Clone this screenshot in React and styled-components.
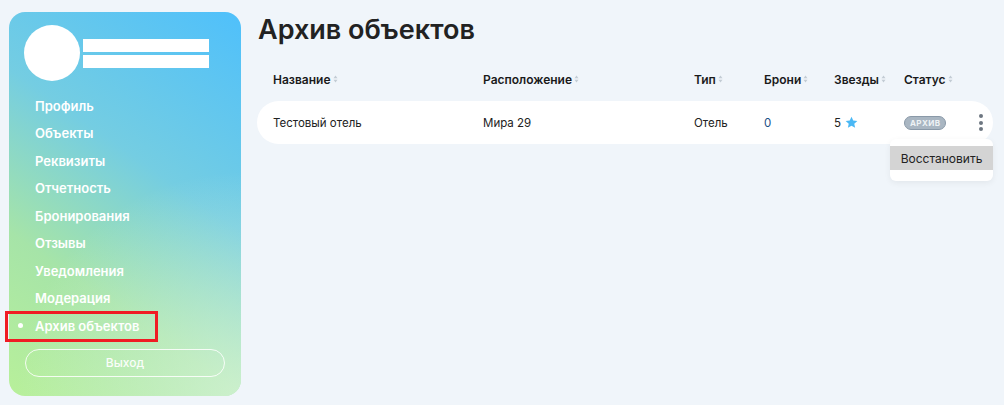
import styled, { createGlobalStyle } from 'styled-components';

const Global = createGlobalStyle`
    body {
        margin: 0;
        background: #f0f5fa;
        font-family: Inter, "Noto Sans", sans-serif;
    }
`

const menu = ["Профиль", "Объекты", "Реквизиты", "Отчетность", "Бронирования", "Отзывы", "Уведомления", "Модерация", "Архив объектов"];
const columns = ["Название", "Расположение", "Тип", "Брони", "Звезды", "Статус"];

function SortIcon() {
    return (
        <svg width="5" height="8" viewBox="0 0 5 8">
            <path d="M2.5 0.5 L4.5 3.2 L0.5 3.2 Z" fill="#c3ccd4" />
            <path d="M2.5 7.5 L4.5 4.8 L0.5 4.8 Z" fill="#c3ccd4" />
        </svg>
    )
}

function Star() {
    return (
        <svg width="13" height="13" viewBox="0 0 24 24">
            <path d="M12 1.5l3.2 7 7.6.8-5.7 5.1 1.6 7.5L12 18l-6.7 3.9 1.6-7.5L1.2 9.3l7.6-.8z" fill="#4ab8f5" />
        </svg>
    )
}

export default function App() {
    return (
        <Page>
            <Global />
            <Sidebar>
                <User>
                    <Avatar />
                    <Lines>
                        <Line />
                        <Line />
                    </Lines>
                </User>
                <Menu>
                    {menu.map((item, i) => (
                        <MenuItem key={item} active={i === menu.length - 1}>{item}</MenuItem>
                    ))}
                </Menu>
                <Exit>Выход</Exit>
            </Sidebar>
            <Main>
                <Title>Архив объектов</Title>
                <Header>
                    {columns.map((c) => (
                        <HeadCell key={c}>{c}<SortIcon /></HeadCell>
                    ))}
                </Header>
                <Row>
                    <Cell>Тестовый отель</Cell>
                    <Cell>Мира 29</Cell>
                    <Cell>Отель</Cell>
                    <Cell blue>0</Cell>
                    <Cell>5 <Star /></Cell>
                    <Cell>
                        <Badge>АРХИВ</Badge>
                        <Kebab><i /><i /><i /></Kebab>
                    </Cell>
                    <Dropdown>
                        <DropItem>Восстановить</DropItem>
                    </Dropdown>
                </Row>
            </Main>
        </Page>
    )
}

const Page = styled.div`
    display: flex;
    gap: 16px;
    padding: 12px 11px 9px 9px;
    height: 405px;
    box-sizing: border-box;
`

const Sidebar = styled.div`
    width: 232px;
    flex-shrink: 0;
    border-radius: 16px;
    background: linear-gradient(215deg, #4fc0fb 0%, #74cde2 40%, #a6e4a8 70%, #b8f09a 100%);
    position: relative;
    padding: 13px 0 0;
    box-sizing: border-box;
    display: flex;
    flex-direction: column;

    &::after {
        content: "";
        position: absolute;
        inset: 0;
        border-radius: inherit;
        background: radial-gradient(circle at 100% 100%, rgba(220, 245, 220, 0.7) 0%, rgba(220, 245, 220, 0) 50%);
        pointer-events: none;
    }
`

const User = styled.div`
    display: flex;
    align-items: center;
    padding-left: 15px;
    gap: 3px;
    position: relative;
    z-index: 1;
`

const Avatar = styled.div`
    width: 56px;
    height: 56px;
    border-radius: 50%;
    background: #fff;
`

const Lines = styled.div`
    display: flex;
    flex-direction: column;
    gap: 3px;
`

const Line = styled.div`
    width: 126px;
    height: 13px;
    background: #fff;
`

const Menu = styled.div`
    display: flex;
    flex-direction: column;
    margin-top: 11px;
    position: relative;
    z-index: 1;
`

const MenuItem = styled.div`
    height: 27.5px;
    display: flex;
    align-items: center;
    padding-left: 26px;
    font-size: 13px;
    font-weight: 600;
    color: #fff;
    position: relative;

    &::before {
        content: "";
        display: ${p => p.active ? 'block' : 'none'};
        position: absolute;
        left: 9px;
        top: 11px;
        width: 5px;
        height: 5px;
        border-radius: 50%;
        background: #fff;
    }

    &::after {
        content: "";
        display: ${p => p.active ? 'block' : 'none'};
        position: absolute;
        left: -4px;
        top: -1px;
        width: 153px;
        height: 31px;
        box-sizing: border-box;
        border: 3px solid #f01c24;
    }
`

const Exit = styled.div`
    margin: 9px 16px 0;
    height: 26px;
    border: 1px solid rgba(255, 255, 255, 0.85);
    border-radius: 14px;
    display: flex;
    align-items: center;
    justify-content: center;
    color: rgba(255, 255, 255, 0.95);
    font-size: 12px;
    font-weight: 500;
    position: relative;
    z-index: 1;
`

const Main = styled.div`
    flex: 1;
    display: flex;
    flex-direction: column;
`

const Title = styled.h1`
    margin: 2px 0 0 1px;
    font-size: 27px;
    font-weight: 600;
    color: #222;
    line-height: 32px;
`

const grid = `
    display: grid;
    grid-template-columns: 210px 211px 70px 70px 70px 1fr;
    padding-left: 16px;
`

const Header = styled.div`
    ${grid}
    margin-top: 24px;
    height: 18px;
    align-items: center;
`

const HeadCell = styled.div`
    display: flex;
    align-items: center;
    gap: 2px;
    font-size: 12px;
    font-weight: 600;
    color: #1a1a1a;
`

const Row = styled.div`
    ${grid}
    margin-top: 13px;
    height: 43px;
    background: #fff;
    border-radius: 22px;
    align-items: center;
    position: relative;
`

const Cell = styled.div`
    display: flex;
    align-items: center;
    gap: 4px;
    font-size: 11.5px;
    color: ${p => p.blue ? '#1d4f86' : '#222'};
`

const Badge = styled.div`
    height: 14px;
    box-sizing: border-box;
    padding: 0 5px;
    border-radius: 7px;
    background: #a9b6c2;
    border: 1px solid #8a99a8;
    color: #eef2f5;
    font-size: 8px;
    font-weight: 700;
    letter-spacing: 0.4px;
    display: flex;
    align-items: center;
`

const Kebab = styled.div`
    margin-left: auto;
    margin-right: 10px;
    display: flex;
    flex-direction: column;
    gap: 2.5px;

    i {
        display: block;
        width: 4px;
        height: 4px;
        border-radius: 50%;
        background: #6d7681;
    }
`

const Dropdown = styled.div`
    position: absolute;
    right: 0;
    top: 38px;
    width: 103px;
    padding: 7px 0 11px;
    background: #fff;
    border-radius: 6px;
    box-shadow: 0 2px 6px rgba(0, 0, 0, 0.06);
    z-index: 2;
`

const DropItem = styled.div`
    height: 24px;
    background: #d4d4d4;
    display: flex;
    align-items: center;
    justify-content: center;
    font-size: 12px;
    color: #222;
`
